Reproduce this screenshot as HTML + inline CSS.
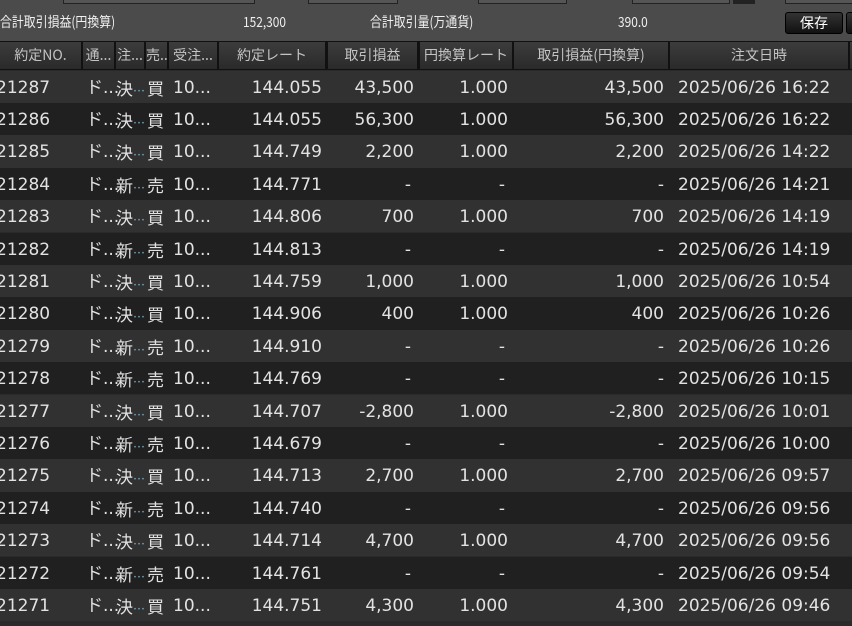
<!DOCTYPE html>
<html><head><meta charset="utf-8"><style>
*{margin:0;padding:0;box-sizing:border-box}
body{width:852px;height:620px;overflow:hidden;background:#2a2a2a;font-family:"DejaVu Sans","Noto Sans CJK JP",sans-serif;color:#e2e2e2;position:relative}
.top{position:absolute;left:0;top:0;width:852px;height:41px;background:#4b4b4b}
.box{position:absolute;top:-2px;height:6px;border:1px solid #222;background:#555}
.lbl{position:absolute;top:12px;font-size:14px;color:#f0f0f0;font-family:"Noto Sans CJK JP",sans-serif;transform:scaleX(.85);transform-origin:left}
.btn{position:absolute;left:785px;top:12px;width:58px;height:22px;background:linear-gradient(#333,#111);border:1px solid #000;border-radius:3px;color:#fff;font-size:14px;text-align:center;line-height:20px;font-family:"Noto Sans CJK JP",sans-serif}
.hdr{position:absolute;top:41px;height:29px;left:0;width:852px;background:#111}
.hc{position:absolute;top:1px;height:27px;background:linear-gradient(#3c3c3c,#2a2a2a);color:#c4c4c4;font-size:14px;line-height:27px;text-align:center;white-space:nowrap;overflow:hidden;font-family:"Noto Sans CJK JP",sans-serif}
.r{position:absolute;left:0;width:852px;height:32.4px;font-size:17px;line-height:34px;white-space:nowrap}
.o{background:#313131}.e{background:#202020}
.r span{position:absolute;top:0}
</style></head><body>
<div class="top">
<div class="box" style="left:63px;width:192px"></div>
<div class="box" style="left:308px;width:90px"></div>
<div class="box" style="left:478px;width:89px"></div>
<div class="box" style="left:632px;width:98px"></div>
<div class="box" style="left:733px;width:22px;background:#222"></div>
<div class="box" style="left:785px;width:70px"></div>
<div class="lbl" style="left:0">合計取引損益(円換算)</div>
<div class="lbl" style="left:243px">152,300</div>
<div class="lbl" style="left:370px">合計取引量(万通貨)</div>
<div class="lbl" style="left:618px">390.0</div>
<div class="btn">保存</div>
<div class="btn" style="left:846px;width:10px"></div>
</div>
<div class="hdr">
<div class="hc" style="left:0;width:81px">約定NO.</div>
<div class="hc" style="left:83px;width:31px">通...</div>
<div class="hc" style="left:116px;width:28px">注...</div>
<div class="hc" style="left:146px;width:21px">売..</div>
<div class="hc" style="left:169px;width:48px">受注...</div>
<div class="hc" style="left:219px;width:106px">約定レート</div>
<div class="hc" style="left:328px;width:89px">取引損益</div>
<div class="hc" style="left:420px;width:92px">円換算レート</div>
<div class="hc" style="left:514px;width:154px">取引損益(円換算)</div>
<div class="hc" style="left:670px;width:178px">注文日時</div>
<div class="hc" style="left:850px;width:10px"></div>
</div>
<div id="rows"></div>
<script>
var d=[["21287","決","買","144.055","43,500","16:22"],["21286","決","買","144.055","56,300","16:22"],["21285","決","買","144.749","2,200","14:22"],["21284","新","売","144.771","-","14:21"],["21283","決","買","144.806","700","14:19"],["21282","新","売","144.813","-","14:19"],["21281","決","買","144.759","1,000","10:54"],["21280","決","買","144.906","400","10:26"],["21279","新","売","144.910","-","10:26"],["21278","新","売","144.769","-","10:15"],["21277","決","買","144.707","-2,800","10:01"],["21276","新","売","144.679","-","10:00"],["21275","決","買","144.713","2,700","09:57"],["21274","新","売","144.740","-","09:56"],["21273","決","買","144.714","4,700","09:56"],["21272","新","売","144.761","-","09:54"],["21271","決","買","144.751","4,300","09:46"]];
var h="";d.forEach(function(x,i){var t=70.5+i*32.4;var cr=x[4]=="-"?"-":"1.000";
h+='<div class="r '+(i%2?'e':'o')+'" style="top:'+t+'px">'+
'<span style="left:-4px">'+x[0]+'</span>'+
'<span style="left:86px">ド...</span>'+
'<span style="left:116px;font-family:\'Noto Sans CJK JP\'">'+x[1]+'<span style="position:static;font-size:12px;color:#7ab">…</span></span>'+
'<span style="left:147px;font-family:\'Noto Sans CJK JP\'">'+x[2]+'</span>'+
'<span style="left:173px">10...</span>'+
'<span style="right:530px">'+x[3]+'</span>'+
'<span style="right:'+(x[4]=="-"?441:438)+'px">'+x[4]+'</span>'+
'<span style="right:'+(cr=="-"?347:344)+'px">'+cr+'</span>'+
'<span style="right:188px">'+x[4]+'</span>'+
'<span style="left:678px">2025/06/26 '+x[5]+'</span></div>';});
document.getElementById("rows").innerHTML=h;
</script>
</body></html>
